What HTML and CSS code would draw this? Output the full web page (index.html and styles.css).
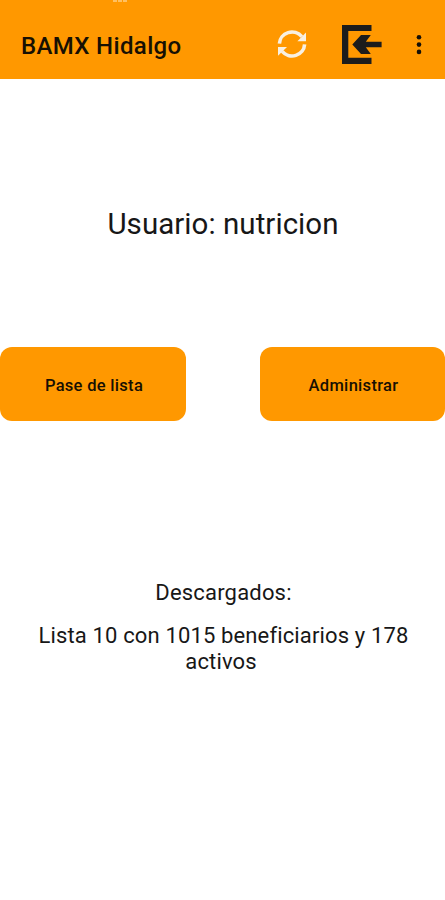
FILE: index.html
```html
<!DOCTYPE html>
<html lang="es">
<head>
<meta charset="utf-8">
<title>BAMX Hidalgo</title>
<link rel="stylesheet" href="styles.css">
</head>
<body>
<header class="appbar">
  <span class="status-mark"><i></i><i></i><i></i></span>
  <h1 class="title">BAMX Hidalgo</h1>
  <svg class="icon-sync" viewBox="0 0 32 32" width="32" height="32">
    <g fill="none" stroke="#f8f0e2" stroke-width="3.6">
      <path d="M3.4 14.6A12.6 12.2 0 0 1 25.8 7.6"/>
      <path d="M28.6 15.4A12.6 12.2 0 0 1 6.2 22.4"/>
    </g>
    <path fill="#f8f0e2" d="M30 3.4V12.2H21.4z"/>
    <path fill="#f8f0e2" d="M2 26.8V18H11z"/>
  </svg>
  <svg class="icon-exit" viewBox="0 0 40 40" width="40" height="40" fill="#1c1c1c">
    <path d="M0 0H29.5V6H6.3V32.8H29.5V39H0z"/>
    <path d="M10.3 19.5 19 10H28.8L23.8 16.7H39.6V22.3H23.8L28.8 29H19z"/>
  </svg>
  <svg class="icon-more" viewBox="0 0 6 20" width="6" height="20" fill="#141008">
    <circle cx="3" cy="2.3" r="2.3"/><circle cx="3" cy="9.6" r="2.3"/><circle cx="3" cy="16.9" r="2.3"/>
  </svg>
</header>
<main>
  <p class="user">Usuario: nutricion</p>
  <div class="actions">
    <button class="btn btn-list">Pase de lista</button>
    <button class="btn btn-admin">Administrar</button>
  </div>
  <p class="label">Descargados:</p>
  <p class="summary">Lista 10 con 1015 beneficiarios y 178 activos</p>
</main>
</body>
</html>
```
FILE: styles.css
```css
* { box-sizing: border-box; }
body {
  margin: 0;
  height: 900px;
  overflow: hidden;
  background: #fff;
  color: #171717;
  font-family: Roboto, "Liberation Sans", sans-serif;
}
p, h1 { margin: 0; }
.appbar {
  position: relative;
  display: flex;
  align-items: center;
  height: 79px;
  padding: 10px 23px 0 21px;
  background: #ff9800;
}
.status-mark {
  position: absolute;
  top: 0;
  left: 113px;
  display: flex;
  gap: 1px;
}
.status-mark i { width: 4px; height: 2px; background: #ffc061; }
.title {
  margin-right: auto;
  padding-top: 2px;
  font-size: 24px;
  font-weight: 500;
  line-height: 32px;
  letter-spacing: 0.35px;
  color: #171003;
}
.icon-sync { margin-right: 34px; }
.icon-exit { margin-right: 34px; }
.user {
  margin-top: 125px;
  padding-left: 1px;
  text-align: center;
  font-size: 29.5px;
  line-height: 40px;
  letter-spacing: 0.05px;
}
.actions {
  display: flex;
  justify-content: space-between;
  margin-top: 103px;
}
.btn {
  width: 186px;
  height: 74px;
  padding: 2px 0 0 2px;
  border: 0;
  border-radius: 12px;
  background: #ff9800;
  color: #171003;
  font: 500 16.5px Roboto, "Liberation Sans", sans-serif;
  letter-spacing: 0.3px;
}
.btn-admin { width: 185px; }
.label {
  margin-top: 159px;
  padding-left: 2px;
  text-align: center;
  font-size: 22px;
  line-height: 26px;
  letter-spacing: 0.18px;
}
.summary {
  width: 400px;
  margin: 17px 0 0 21px;
  text-align: center;
  text-indent: 5px;
  font-size: 22px;
  line-height: 26px;
  letter-spacing: 0.14px;
}
```
